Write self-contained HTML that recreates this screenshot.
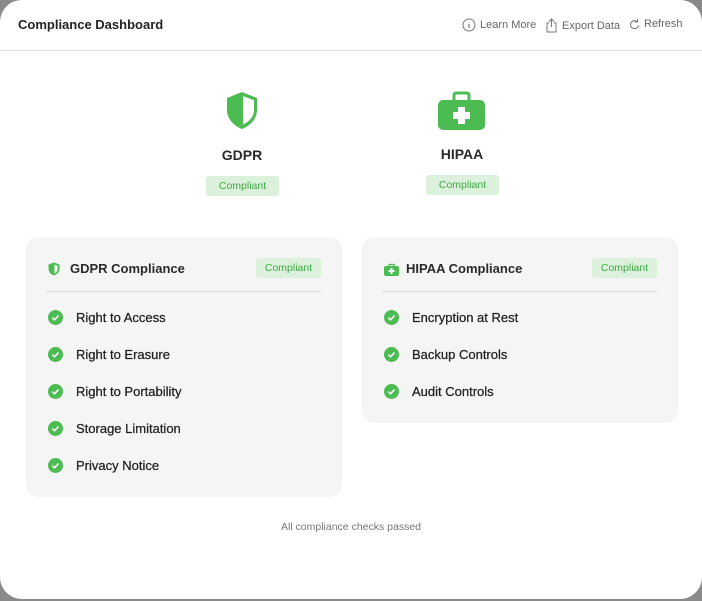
<!DOCTYPE html>
<html><head><style>
*{margin:0;padding:0;box-sizing:border-box}
body{width:702px;height:601px;background:#8a8a8a;font-family:"Liberation Sans",sans-serif;position:relative;overflow:hidden}
.win{position:absolute;left:0;top:0;width:702px;height:599px;background:#fff;border-radius:22px;overflow:hidden}
.hdr{position:absolute;left:0;top:0;width:702px;height:51px;border-bottom:1px solid #e2e2e2}
.title{position:absolute;left:18px;top:17px;font-size:13px;font-weight:bold;color:#222}
.act{position:absolute;top:18px;font-size:11px;color:#666;display:flex;align-items:center;gap:4px}
.lbl{position:absolute;font-size:14px;font-weight:bold;color:#2a2a2a;text-align:center}
.badge{position:absolute;background:#dcf1dc;color:#3faa45;font-size:10.5px;border-radius:3px;text-align:center;line-height:20px;height:20px}
.card{position:absolute;background:#f5f5f5;border-radius:12px}
.ct{position:absolute;left:44px;top:24px;font-size:13px;font-weight:bold;color:#2a2a2a}
.div{position:absolute;left:20px;right:21px;top:54px;height:1px;background:#dcdcdc}
.item{position:absolute;left:22px;font-size:13px;color:#1f1f1f;display:flex;align-items:center;-webkit-text-stroke:0.25px #1f1f1f}
.item svg{margin-right:13px}
</style></head><body>
<div class="win">
<div class="hdr">
<div class="title">Compliance Dashboard</div>
<div class="act" style="left:462px"><svg width="14" height="14" viewBox="0 0 14 14"><circle cx="7" cy="7" r="6" fill="none" stroke="#777" stroke-width="1"/><path d="M7 6v4M7 4v.5" stroke="#777" stroke-width="1.2"/></svg>Learn More</div>
<div class="act" style="left:545px"><svg width="13" height="15" viewBox="0 0 13 15"><path d="M4 5H2v9h9V5H9M6.5 1v8M4 3.5l2.5-2.5 2.5 2.5" fill="none" stroke="#777" stroke-width="1"/></svg>Export Data</div>
<div class="act" style="left:629px"><svg width="11" height="12" viewBox="0 0 11 12"><path d="M8.5 4A4 4 0 1 0 9.5 7M8.5 1v3h-3" fill="none" stroke="#777" stroke-width="1"/></svg> Refresh</div>
</div>
<svg style="position:absolute;left:225px;top:91px" width="34" height="39" viewBox="0 0 34 39"><path d="M17 1L32 7v12c0 9-7 16-15 19C9 35 2 28 2 19V7z" fill="#4cbb52"/><path d="M18 5L29 9.2V19c0 6.5-4.5 11.5-11 14.5z" fill="#fff"/></svg>
<svg style="position:absolute;left:438px;top:91px" width="47" height="39" viewBox="0 0 47 39"><path d="M16 9V4a2 2 0 0 1 2-2h11a2 2 0 0 1 2 2v5" fill="none" stroke="#4cbb52" stroke-width="3"/><rect x="0" y="9" width="47" height="30" rx="5" fill="#4cbb52"/><path d="M20 16h7v5h5v7h-5v5h-7v-5h-5v-7h5z" fill="#fff"/></svg>
<div class="lbl" style="left:202px;top:147px;width:80px">GDPR</div>
<div class="lbl" style="left:422px;top:146px;width:80px">HIPAA</div>
<div class="badge" style="left:206px;top:176px;width:73px">Compliant</div>
<div class="badge" style="left:426px;top:175px;width:73px">Compliant</div>

<div class="card" style="left:26px;top:237px;width:316px;height:260px">
<svg style="position:absolute;left:22px;top:25px" width="12" height="14" viewBox="0 0 12 14"><path d="M6 0.5L11.5 2.5v4c0 3.5-2.5 6-5.5 7C3 12.5.5 10 .5 6.5v-4z" fill="#4cbb52"/><path d="M6.5 2.5L9.5 3.7v3c0 2.5-1.5 4-3 4.8z" fill="#fff"/></svg>
<div class="ct">GDPR Compliance</div>
<div class="badge" style="left:230px;top:21px;width:65px">Compliant</div>
<div class="div"></div>
<div class="item" style="top:73px"><svg width="15" height="15" viewBox="0 0 15 15"><circle cx="7.5" cy="7.5" r="7.5" fill="#4cbb52"/><path d="M4.3 7.7l2.2 2.1 4-4.2" fill="none" stroke="#fff" stroke-width="1.6"/></svg>Right to Access</div>
<div class="item" style="top:110px"><svg width="15" height="15" viewBox="0 0 15 15"><circle cx="7.5" cy="7.5" r="7.5" fill="#4cbb52"/><path d="M4.3 7.7l2.2 2.1 4-4.2" fill="none" stroke="#fff" stroke-width="1.6"/></svg>Right to Erasure</div>
<div class="item" style="top:147px"><svg width="15" height="15" viewBox="0 0 15 15"><circle cx="7.5" cy="7.5" r="7.5" fill="#4cbb52"/><path d="M4.3 7.7l2.2 2.1 4-4.2" fill="none" stroke="#fff" stroke-width="1.6"/></svg>Right to Portability</div>
<div class="item" style="top:184px"><svg width="15" height="15" viewBox="0 0 15 15"><circle cx="7.5" cy="7.5" r="7.5" fill="#4cbb52"/><path d="M4.3 7.7l2.2 2.1 4-4.2" fill="none" stroke="#fff" stroke-width="1.6"/></svg>Storage Limitation</div>
<div class="item" style="top:221px"><svg width="15" height="15" viewBox="0 0 15 15"><circle cx="7.5" cy="7.5" r="7.5" fill="#4cbb52"/><path d="M4.3 7.7l2.2 2.1 4-4.2" fill="none" stroke="#fff" stroke-width="1.6"/></svg>Privacy Notice</div>
</div>

<div class="card" style="left:362px;top:237px;width:316px;height:186px">
<svg style="position:absolute;left:22px;top:26px" width="15" height="13" viewBox="0 0 15 13"><path d="M5 3V1.5h5V3" fill="none" stroke="#4cbb52" stroke-width="1.3"/><rect x="0" y="3" width="15" height="10" rx="2" fill="#4cbb52"/><path d="M6.5 5h2v2h2v2h-2v2h-2V9h-2V7h2z" fill="#fff"/></svg>
<div class="ct">HIPAA Compliance</div>
<div class="badge" style="left:230px;top:21px;width:65px">Compliant</div>
<div class="div"></div>
<div class="item" style="top:73px"><svg width="15" height="15" viewBox="0 0 15 15"><circle cx="7.5" cy="7.5" r="7.5" fill="#4cbb52"/><path d="M4.3 7.7l2.2 2.1 4-4.2" fill="none" stroke="#fff" stroke-width="1.6"/></svg>Encryption at Rest</div>
<div class="item" style="top:110px"><svg width="15" height="15" viewBox="0 0 15 15"><circle cx="7.5" cy="7.5" r="7.5" fill="#4cbb52"/><path d="M4.3 7.7l2.2 2.1 4-4.2" fill="none" stroke="#fff" stroke-width="1.6"/></svg>Backup Controls</div>
<div class="item" style="top:147px"><svg width="15" height="15" viewBox="0 0 15 15"><circle cx="7.5" cy="7.5" r="7.5" fill="#4cbb52"/><path d="M4.3 7.7l2.2 2.1 4-4.2" fill="none" stroke="#fff" stroke-width="1.6"/></svg>Audit Controls</div>
</div>

<div style="position:absolute;left:0;width:702px;top:521px;text-align:center;font-size:10.5px;color:#777">All compliance checks passed</div>
</div>
</body></html>
